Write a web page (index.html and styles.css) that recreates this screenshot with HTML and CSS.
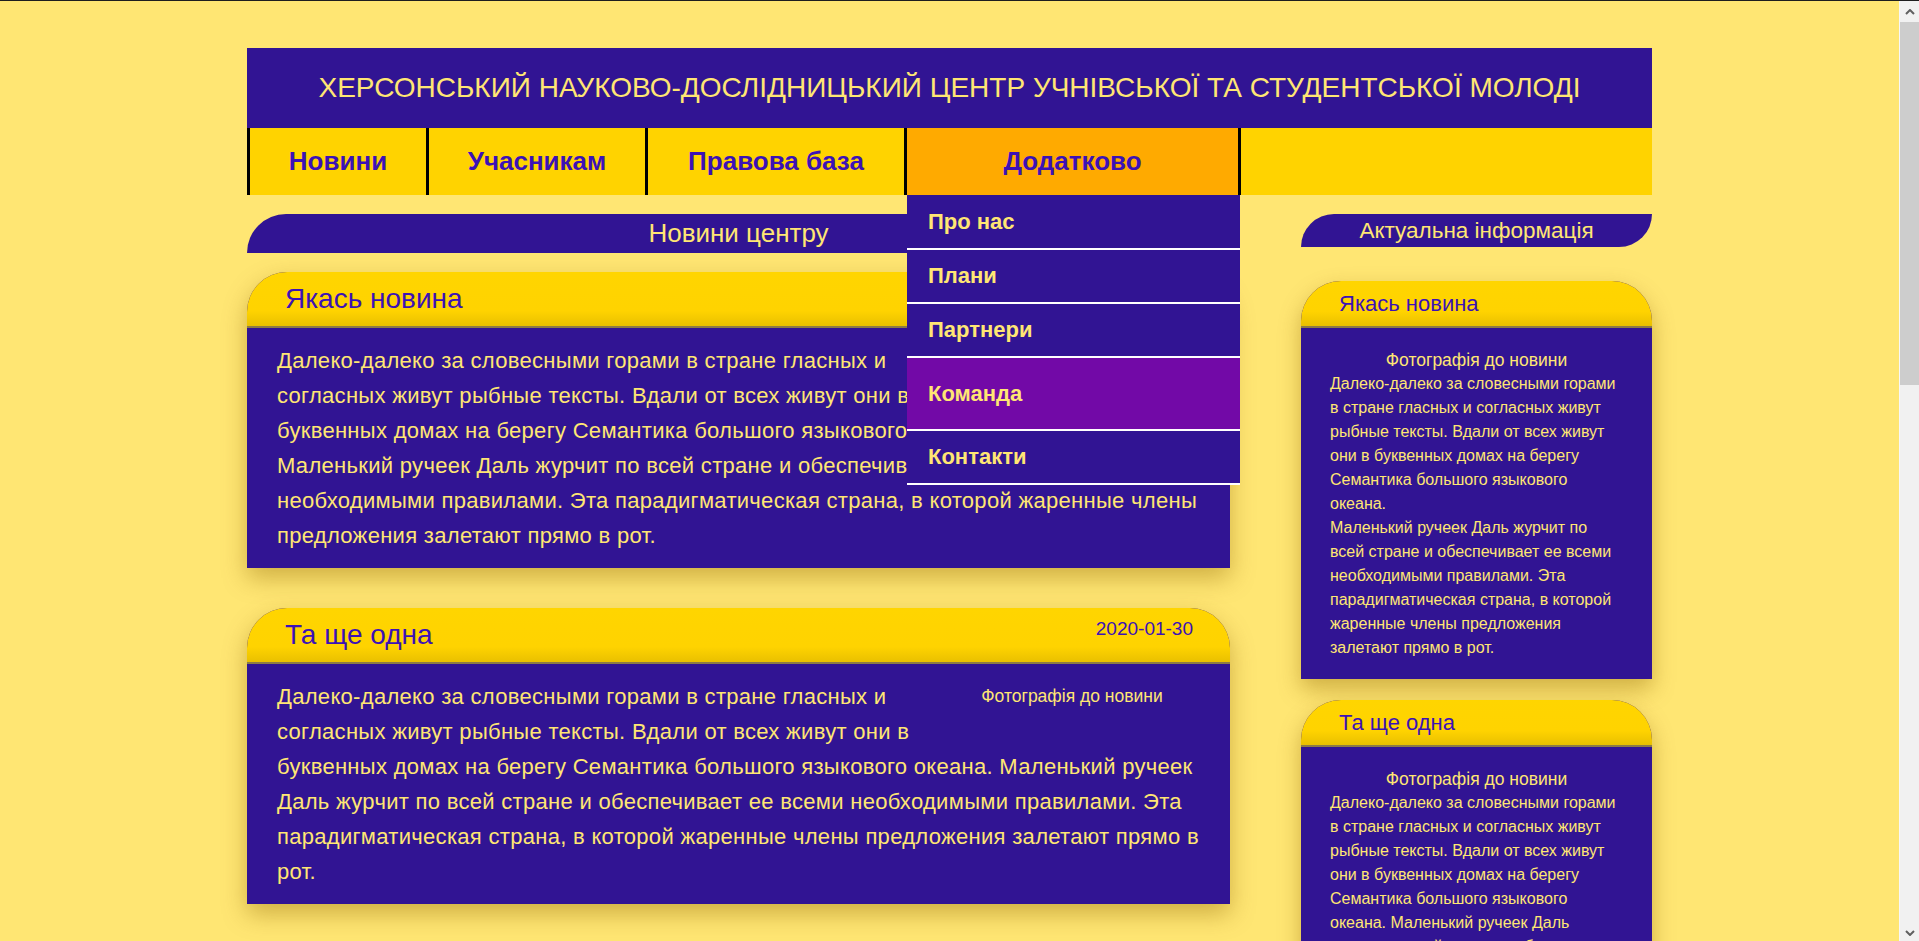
FILE: index.html
```html
<!DOCTYPE html>
<html lang="uk">
<head>
<meta charset="utf-8">
<title>Херсонський науково-дослідницький центр</title>
<link rel="stylesheet" href="styles.css">
</head>
<body>
<div class="viewport">
<div class="page">
  <header class="site-header">
    <h1 class="site-title">Херсонський науково-дослідницький центр учнівської та студентської молоді</h1>
  </header>
  <nav class="nav">
    <a class="nav-item nav-news">Новини</a>
    <a class="nav-item nav-members">Учасникам</a>
    <a class="nav-item nav-law">Правова база</a>
    <div class="nav-item nav-more open">
      <span>Додатково</span>
      <ul class="dropdown">
        <li class="dd-item">Про нас</li>
        <li class="dd-item">Плани</li>
        <li class="dd-item">Партнери</li>
        <li class="dd-item dd-active">Команда</li>
        <li class="dd-item">Контакти</li>
      </ul>
    </div>
    <div class="nav-fill"></div>
  </nav>

  <div class="content">
    <main class="main-col">
      <h2 class="bar bar-main">Новини центру</h2>

      <article class="news-card">
        <header class="news-head"><h3 class="news-title">Якась новина</h3><span class="news-date">2020-01-30</span></header>
        <div class="news-body">
          <div class="news-photo">Фотографія до новини</div>
          <p>Далеко-далеко за словесными горами в стране гласных и согласных живут рыбные тексты. Вдали от всех живут они в буквенных домах на берегу Семантика большого языкового океана.<br>Маленький ручеек Даль журчит по всей стране и обеспечивает ее всеми необходимыми правилами. Эта парадигматическая страна, в которой жаренные члены предложения залетают прямо в рот.</p>
        </div>
      </article>

      <article class="news-card">
        <header class="news-head"><h3 class="news-title">Та ще одна</h3><span class="news-date">2020-01-30</span></header>
        <div class="news-body">
          <div class="news-photo">Фотографія до новини</div>
          <p>Далеко-далеко за словесными горами в стране гласных и согласных живут рыбные тексты. Вдали от всех живут они в буквенных домах на берегу Семантика большого языкового океана. Маленький ручеек Даль журчит по всей стране и обеспечивает ее всеми необходимыми правилами. Эта парадигматическая страна, в которой жаренные члены предложения залетают прямо в рот.</p>
        </div>
      </article>
    </main>

    <aside class="side-col">
      <h2 class="bar bar-side">Актуальна інформація</h2>

      <article class="side-card">
        <h3 class="side-head">Якась новина</h3>
        <div class="side-body">
          <div class="side-photo">Фотографія до новини</div>
          <p>Далеко-далеко за словесными горами в стране гласных и согласных живут рыбные тексты. Вдали от всех живут они в буквенных домах на берегу Семантика большого языкового океана.<br>Маленький ручеек Даль журчит по всей стране и обеспечивает ее всеми необходимыми правилами. Эта парадигматическая страна, в которой жаренные члены предложения залетают прямо в рот.</p>
        </div>
      </article>

      <article class="side-card">
        <h3 class="side-head">Та ще одна</h3>
        <div class="side-body">
          <div class="side-photo">Фотографія до новини</div>
          <p>Далеко-далеко за словесными горами в стране гласных и согласных живут рыбные тексты. Вдали от всех живут они в буквенных домах на берегу Семантика большого языкового океана. Маленький ручеек Даль журчит по всей стране и обеспечивает ее всеми необходимыми правилами. Эта парадигматическая страна, в которой жаренные члены предложения залетают прямо в рот.</p>
        </div>
      </article>
    </aside>
  </div>
</div>
</div>
<div class="scrollbar" aria-hidden="true">
  <div class="sb-btn sb-up"><svg width="10" height="6" viewBox="0 0 10 6"><path d="M1 5 L5 1 L9 5" fill="none" stroke="#606060" stroke-width="2"/></svg></div>
  <div class="sb-thumb"></div>
  <div class="sb-track"></div>
  <div class="sb-btn sb-down"><svg width="10" height="6" viewBox="0 0 10 6"><path d="M1 1 L5 5 L9 1" fill="none" stroke="#606060" stroke-width="2"/></svg></div>
</div>
</body>
</html>
```

FILE: styles.css
```css
html, body {
  height: 100%;
  margin: 0;
  overflow: hidden;
}

body {
  box-sizing: border-box;
  display: flex;
  border-top: 1px solid #1e1e1e;
  background: #ffe673;
  font-family: "Liberation Sans", Arial, sans-serif;
  color: #ffe673;
}

.viewport {
  flex: 1;
  min-width: 0;
  overflow: hidden;
}

/* imitation of the browser scrollbar shown in the screenshot */
.scrollbar {
  width: 19px;
  flex: none;
  display: flex;
  flex-direction: column;
  background: #f1f1f1;
  border-left: 1px solid #f7f7f7;
}
.sb-btn {
  height: 21px;
  display: flex;
  align-items: center;
  justify-content: center;
}
.sb-down { height: 17px; }
.sb-thumb {
  height: 363px;
  background: #cdcdcd;
}
.sb-track { flex: 1; }

.page {
  width: 1405px;
  margin: 47px auto 40px;
}

/* Header */
.site-header {
  background: #311493;
  height: 80px;
  display: flex;
  align-items: center;
  justify-content: center;
}
.site-title {
  margin: 0;
  font-size: 28px;
  font-weight: normal;
  text-transform: uppercase;
  color: #ffe673;
}

/* Nav */
.nav {
  display: flex;
  height: 67px;
  background: #ffd300;
}
.nav-item {
  display: flex;
  align-items: center;
  justify-content: center;
  border-left: 3px solid #000;
  font-size: 26px;
  font-weight: bold;
  color: #3c12b6;
  cursor: pointer;
}
.nav-news { width: 176px; }
.nav-members { width: 216px; }
.nav-law { width: 256px; }
.nav-more {
  width: 331px;
  border-right: 3px solid #000;
  background: #ffaa00;
  position: relative;
}
.nav-fill { flex: 1; }

.dropdown {
  position: absolute;
  top: 100%;
  left: 0;
  width: 333px;
  margin: 0;
  padding: 0;
  list-style: none;
  z-index: 10;
}
.dd-item {
  display: flex;
  align-items: center;
  height: 52px;
  padding-left: 21px;
  background: #311493;
  border-bottom: 2px solid #fff;
  font-size: 22px;
  font-weight: bold;
  color: #ffe673;
}
.dd-item:first-child { height: 53px; }
.dd-active {
  height: 71px;
  background: #7209a7;
}

/* Content */
.content {
  display: flex;
  justify-content: space-between;
  align-items: flex-start;
  margin-top: 19px;
}
.main-col { width: 983px; }
.side-col { width: 351px; }

.bar {
  margin: 0;
  background: #311493;
  color: #ffe673;
  font-weight: normal;
  text-align: center;
}
.bar-main {
  height: 39px;
  line-height: 39px;
  font-size: 26px;
  border-radius: 40px 0 40px 0;
  margin-bottom: 19px;
}
.bar-side {
  height: 33px;
  line-height: 33px;
  font-size: 22.5px;
  border-radius: 34px 0 34px 0;
  margin-bottom: 34px;
}

/* Main news cards */
.news-card {
  background: #311493;
  border-radius: 40px 40px 0 0;
  box-shadow: 0 10px 24px rgba(140, 100, 0, 0.42);
  margin-bottom: 40px;
}
.news-head {
  display: flex;
  justify-content: space-between;
  align-items: flex-start;
  height: 54px;
  padding: 0 37px 0 38px;
  background: linear-gradient(to bottom, #ffd500 0%, #ffd300 72%, #e9c000 100%);
  border-bottom: 2px solid #8c7b45;
  border-radius: 40px 40px 0 0;
}
.news-title {
  margin: 0;
  align-self: center;
  font-size: 28px;
  font-weight: normal;
  color: #3c12b6;
}
.news-date {
  margin-top: 10px;
  font-size: 19px;
  color: #3c12b6;
}
.news-body {
  padding: 15px 30px;
  font-size: 22px;
  letter-spacing: 0.3px;
  line-height: 35px;
  color: #ffe673;
}
.news-body p { margin: 0; }
.news-photo {
  float: right;
  width: 256px;
  height: 60px;
  font-size: 17.5px;
  letter-spacing: 0;
  line-height: 35px;
  text-align: center;
}

/* Side cards */
.side-card {
  background: #311493;
  border-radius: 40px 40px 0 0;
  box-shadow: 0 10px 22px rgba(140, 100, 0, 0.42);
  margin-bottom: 21px;
}
.side-head {
  margin: 0;
  height: 45px;
  line-height: 45px;
  padding-left: 38px;
  font-size: 22px;
  font-weight: normal;
  color: #3c12b6;
  background: linear-gradient(to bottom, #ffd500 0%, #ffd300 68%, #e9c000 100%);
  border-bottom: 2px solid #8c7b45;
  border-radius: 40px 40px 0 0;
}
.side-body {
  padding: 20px 29px 19px;
  font-size: 16px;
  line-height: 24px;
  color: #ffe673;
}
.side-body p { margin: 0; }
.side-photo {
  text-align: center;
  height: 24px;
  font-size: 17.5px;
}
```
